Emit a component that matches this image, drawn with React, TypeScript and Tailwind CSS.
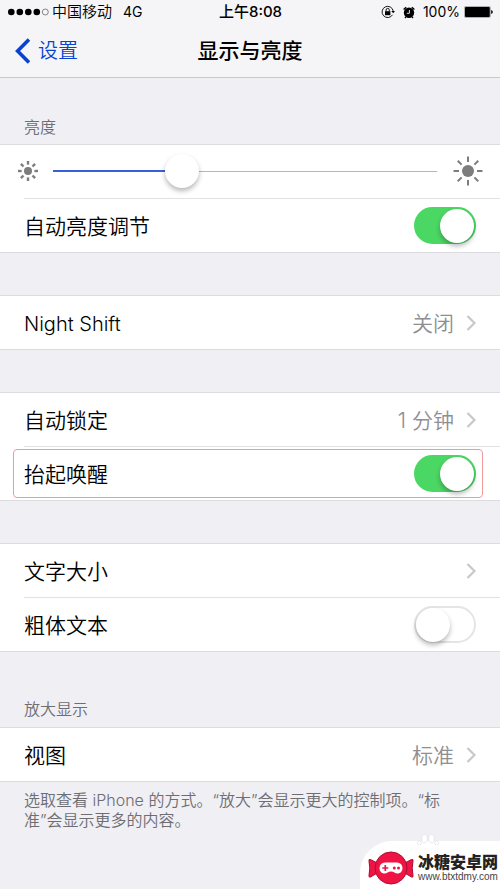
import { useState } from "react";
import type { ReactNode } from "react";

const ROW = "flex h-[53px] items-center justify-between pr-6";

function Toggle({ id, initial }: { id: string; initial: boolean }) {
  const [on, setOn] = useState(initial);
  return (
    <input
      id={id}
      type="checkbox"
      role="switch"
      checked={on}
      onChange={() => setOn(!on)}
      className="flex h-[37px] w-[62px] shrink-0 cursor-pointer appearance-none items-center rounded-full border-2 border-[#e5e5e5] bg-white before:size-[34px] before:rounded-full before:bg-white before:shadow-[0_3px_5px_rgba(0,0,0,0.28)] before:content-[''] checked:justify-end checked:border-[#4bd763] checked:bg-[#4bd763]"
    />
  );
}

function Group({ children }: { children: ReactNode }) {
  return <section className="border-y border-[#dcdce0] bg-white pl-6">{children}</section>;
}

function SwitchRow({ id, label, on }: { id: string; label: string; on: boolean }) {
  return (
    <div className={ROW}>
      <label htmlFor={id} className="pt-[2px]">{label}</label>
      <Toggle id={id} initial={on} />
    </div>
  );
}

function LinkRow({ label, value }: { label: ReactNode; value?: string }) {
  return (
    <a href="#" className={ROW}>
      <span className="pt-[2px]">{label}</span>
      <span className="flex items-center gap-3 text-[#8e8e93]">
        {value && <span className="pt-[2px]">{value}</span>}
        <svg viewBox="0 0 10 16" className="h-4 w-[10px]" fill="none" stroke="#c7c7cc" strokeWidth="2.2" aria-hidden="true">
          <path d="M1.5 1 8.5 8l-7 7" />
        </svg>
      </span>
    </a>
  );
}

function Sun({ className, core, inner, outer, width }: { className: string; core: number; inner: number; outer: number; width: number }) {
  return (
    <svg viewBox="-15 -15 30 30" className={className} stroke="#7d7d7d" strokeWidth={width} aria-hidden="true">
      <circle r={core} fill="#7d7d7d" stroke="none" />
      {[0, 45, 90, 135, 180, 225, 270, 315].map((a) => (
        <line key={a} x1="0" y1={-inner} x2="0" y2={-outer} transform={`rotate(${a})`} />
      ))}
    </svg>
  );
}

function StatusBar() {
  return (
    <div className="grid h-6 grid-cols-[1fr_auto_1fr] items-center pr-[7px] pl-2 text-[14px] leading-6 font-normal">
      <div className="flex items-center gap-[3px]">
        <svg viewBox="0 0 41 8" className="h-2 w-[41px]" aria-hidden="true">
          <circle cx="3.3" cy="4" r="3.3" />
          <circle cx="11.8" cy="4" r="3.3" />
          <circle cx="20.3" cy="4" r="3.3" />
          <circle cx="28.8" cy="4" r="3.3" />
          <circle cx="37.3" cy="4" r="3" fill="none" stroke="#555" strokeWidth="0.7" />
        </svg>
        <span className="text-[15px] font-[350]">中国移动</span>
        <span className="ml-2">4G</span>
      </div>
      <div className="text-[15px] font-medium">上午8:08</div>
      <div className="flex items-center justify-end">
        <svg viewBox="0 0 14 14" className="mr-2 size-[14px]" fill="none" stroke="#000" aria-hidden="true">
          <path d="M11.5 9.8A5.6 5.6 0 1 1 12.2 6" strokeWidth="0.9" />
          <path d="m10.3 6 1.9 2.3L14 6z" fill="#000" stroke="none" />
          <rect x="4" y="6.2" width="5.4" height="4" fill="#000" stroke="none" />
          <path d="M5.1 6.4V5a1.6 1.6 0 0 1 3.2 0v1.4" strokeWidth="0.9" />
        </svg>
        <svg viewBox="0 0 12 13" className="mr-2 h-[13px] w-3" aria-hidden="true">
          <circle cx="6" cy="6.8" r="5.2" />
          <path d="M.6 3.6 3.2 1.2M11.4 3.6 8.8 1.2M2.8 11l-.8 1M9.2 11l.8 1" stroke="#000" strokeWidth="1.4" />
          <path d="M6.4 4v3.3H3.8" fill="none" stroke="#f5f5f7" strokeWidth="0.9" />
        </svg>
        <span>100%</span>
        <svg viewBox="0 0 29 12" className="ml-1 h-3 w-[29px]" aria-hidden="true">
          <rect x="0.4" y="0.4" width="26" height="11.2" rx="1.6" fill="none" stroke="#777" strokeWidth="0.6" />
          <rect x="1" y="1" width="24.8" height="10" rx="1" />
          <path d="M27.2 4v4q1.6-.5 1.6-2t-1.6-2z" />
        </svg>
      </div>
    </div>
  );
}

function Watermark() {
  return (
    <div className="absolute right-0 bottom-0">
      <svg viewBox="0 0 22 12" className="ml-[57px] h-3 w-[22px]" fill="#fff" stroke="#dcdce0" strokeWidth="0.6" aria-hidden="true">
        <ellipse cx="7.5" cy="5.5" rx="2.8" ry="4.3" />
        <ellipse cx="14.5" cy="5.5" rx="2.8" ry="4.3" />
        <circle cx="2.5" cy="10" r="2" />
        <circle cx="19.5" cy="10" r="2" />
      </svg>
      <div className="-mt-1 flex h-12 w-[140px] items-center gap-1 rounded-tl-[32px] bg-white pt-[6px] pl-2">
        <svg viewBox="0 0 46 34" className="h-[34px] w-[46px] shrink-0" aria-hidden="true">
          <g fill="#f01445" stroke="#a90d35" strokeWidth="1">
            <path d="M11 13 2.5 8.5Q.5 7.8 1 10.2q1.6 6.8 0 14.3-.4 2.2 1.5 1.5L11 21z" />
            <path d="m35 13 8.5-4.5q2-.7 1.5 1.7-1.6 6.8 0 14.3.4 2.2-1.5 1.5L35 21z" />
            <circle cx="23" cy="17" r="16" />
          </g>
          <path d="M17 11.5h12a5.5 5.5 0 0 1 5.5 5.5c0 3.4-2.2 5.5-5 5.5-2.4 0-3.7-2-6.5-2s-4.1 2-6.5 2c-2.8 0-5-2.1-5-5.5a5.5 5.5 0 0 1 5.5-5.5z" fill="#fff" />
          <path d="M17.3 14v6M14.3 17h6" stroke="#f01445" strokeWidth="1.7" />
          <circle cx="26.3" cy="17" r="1.5" fill="#f01445" />
          <circle cx="30.5" cy="17" r="1.5" fill="#f01445" />
        </svg>
        <div className="whitespace-nowrap text-[#222]">
          <div className="text-[16px] leading-[18px] font-black">冰糖安卓网</div>
          <div className="font-['Liberation_Sans',sans-serif] text-[10px] leading-3 text-[#444]">www.btxtdmy.com</div>
        </div>
      </div>
    </div>
  );
}

export default function App() {
  const [level, setLevel] = useState(32);
  return (
    <div className="relative min-h-screen overflow-hidden bg-[#efeff4] font-[Inter,'Noto_Sans_CJK_SC',sans-serif] text-[21px] leading-7 font-[350] text-black">
      <header className="border-b border-[#c8c8cc] bg-[#f5f5f7]">
        <StatusBar />
        <div className="grid h-[53px] grid-cols-[1fr_auto_1fr] items-center px-[15px]">
          <a href="#" className="flex items-center gap-2 text-[20px] text-[#0a42d0]">
            <svg viewBox="0 0 15 26" className="h-[26px] w-[15px]" fill="none" stroke="currentColor" strokeWidth="3.6" aria-hidden="true">
              <path d="M14 1.5 2.6 13 14 24.5" />
            </svg>
            <span className="pt-px">设置</span>
          </a>
          <h1 className="font-medium">显示与亮度</h1>
        </div>
      </header>

      <main>
        <h2 className="px-6 pt-[38px] pb-[6px] text-[16px] leading-[22px] font-[350] text-[#6d6d72]">亮度</h2>
        <Group>
          <div className="-ml-2 flex h-[53px] items-center pr-[17px] pb-px">
            <Sun className="size-6 shrink-0" core={5} inner={8} outer={12.5} width={3} />
            <input
              type="range"
              aria-label="亮度"
              min={0}
              max={100}
              value={level}
              onChange={(e) => setLevel(Number(e.target.value))}
              style={{ backgroundSize: `${level}% 2px, 100% 1px` }}
              className="mr-4 ml-[13px] h-9 min-w-0 flex-1 appearance-none bg-[linear-gradient(#3a5fd9,#3a5fd9),linear-gradient(#b7b7b7,#b7b7b7)] bg-left bg-no-repeat [&::-webkit-slider-thumb]:size-[34px] [&::-webkit-slider-thumb]:appearance-none [&::-webkit-slider-thumb]:rounded-full [&::-webkit-slider-thumb]:bg-white [&::-webkit-slider-thumb]:shadow-[0_3px_5px_rgba(0,0,0,0.28)]"
            />
            <Sun className="size-[30px] shrink-0" core={6} inner={9} outer={14.5} width={2} />
          </div>
          <div className="border-t border-[#e2e2e5]">
            <SwitchRow id="auto-brightness" label="自动亮度调节" on={true} />
          </div>
        </Group>

        <div className="mt-[42px]">
          <Group>
            <LinkRow label={<span className="text-[20px]">Night Shift</span>} value="关闭" />
          </Group>
        </div>

        <div className="mt-[42px]">
          <Group>
            <LinkRow label="自动锁定" value="1 分钟" />
            <div className="relative border-t border-[#e2e2e5]">
              <SwitchRow id="raise-to-wake" label="抬起唤醒" on={true} />
              <div className="pointer-events-none absolute top-[2px] right-[17px] bottom-[2px] -left-[11px] rounded-[4px] border border-[#f09a9e]" />
            </div>
          </Group>
        </div>

        <div className="mt-[42px]">
          <Group>
            <LinkRow label="文字大小" />
            <div className="border-t border-[#e2e2e5]">
              <SwitchRow id="bold-text" label="粗体文本" on={false} />
            </div>
          </Group>
        </div>

        <h2 className="px-6 pt-[46px] pb-[7px] text-[16px] leading-[22px] font-[350] text-[#6d6d72]">放大显示</h2>
        <Group>
          <LinkRow label="视图" value="标准" />
        </Group>
        <p className="pt-2 pr-12 pb-14 pl-6 text-[16px] leading-5 text-[#6d6d72]">
          选取查看 iPhone 的方式。“放大”会显示更大的控制项。“标准”会显示更多的内容。
        </p>
      </main>
      <Watermark />
    </div>
  );
}
